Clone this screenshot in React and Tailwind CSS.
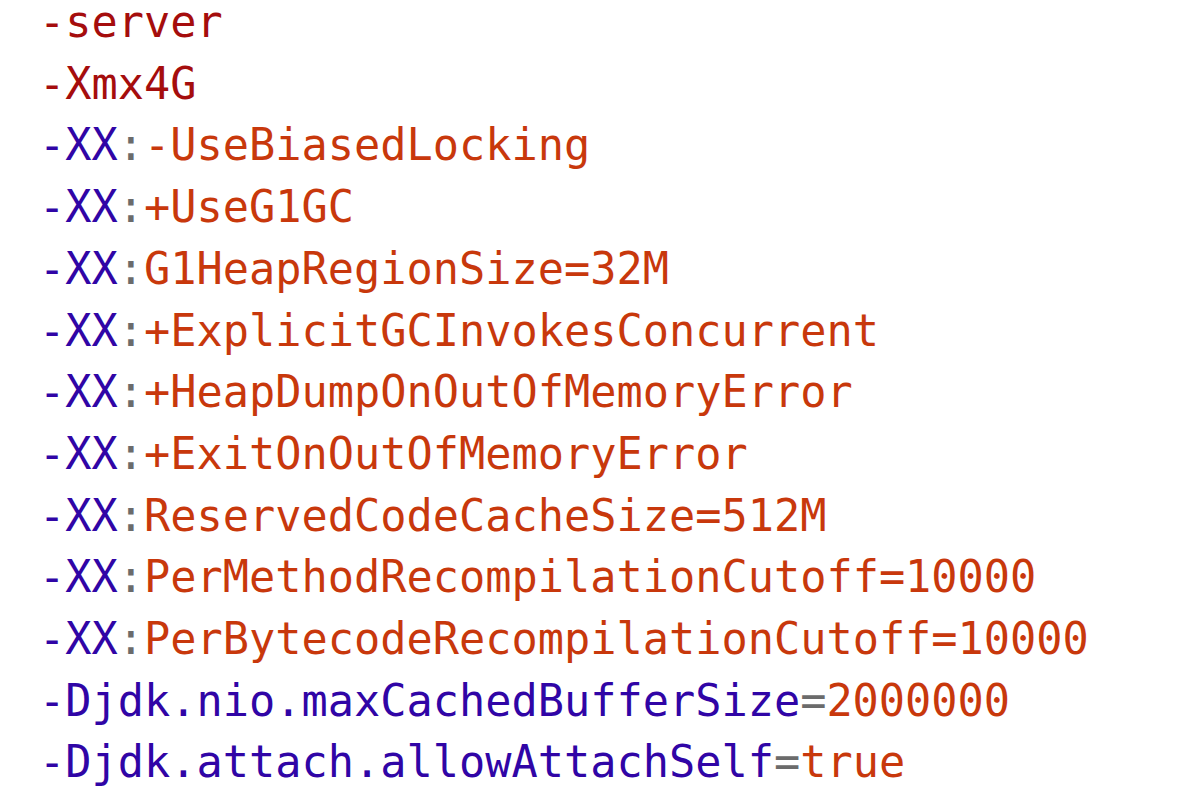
const lines = [
  [["-server", "r"]],
  [["-Xmx4G", "r"]],
  [["-XX", "b"], [":", "g"], ["-UseBiasedLocking", "o"]],
  [["-XX", "b"], [":", "g"], ["+UseG1GC", "o"]],
  [["-XX", "b"], [":", "g"], ["G1HeapRegionSize=32M", "o"]],
  [["-XX", "b"], [":", "g"], ["+ExplicitGCInvokesConcurrent", "o"]],
  [["-XX", "b"], [":", "g"], ["+HeapDumpOnOutOfMemoryError", "o"]],
  [["-XX", "b"], [":", "g"], ["+ExitOnOutOfMemoryError", "o"]],
  [["-XX", "b"], [":", "g"], ["ReservedCodeCacheSize=512M", "o"]],
  [["-XX", "b"], [":", "g"], ["PerMethodRecompilationCutoff=10000", "o"]],
  [["-XX", "b"], [":", "g"], ["PerBytecodeRecompilationCutoff=10000", "o"]],
  [["-Djdk.nio.maxCachedBufferSize", "b"], ["=", "g"], ["2000000", "o"]],
  [["-Djdk.attach.allowAttachSelf", "b"], ["=", "g"], ["true", "o"]],
];

const tone = {
  r: "text-[#a50d0d]",
  b: "text-[#3005a6]",
  g: "text-[#6b6b6b]",
  o: "text-[#c8380c]",
};

export default function App() {
  return (
    <div className="w-[1200px] h-[806px] overflow-hidden bg-white">
      <pre className="mt-[-8px] pl-[39px] font-['DejaVu_Sans_Mono',monospace] text-[43.6px] leading-[61.7px]">
        {lines.map((parts, i) => (
          <div key={i}>
            {parts.map(([t, c], j) => (
              <span key={j} className={tone[c]}>
                {t}
              </span>
            ))}
          </div>
        ))}
      </pre>
    </div>
  );
}
